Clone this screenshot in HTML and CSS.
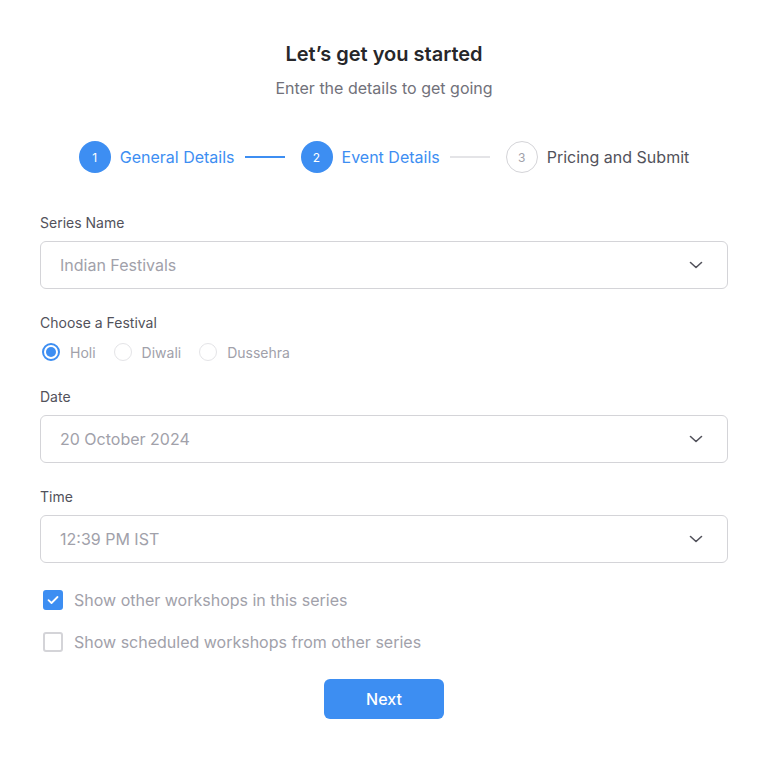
FILE: index.html
```html
<!DOCTYPE html>
<html>
<head>
<meta charset="utf-8">
<link rel="stylesheet" href="styles.css">
</head>
<body>
<div class="page">
  <header class="head">
    <h1 class="title">Let’s get you started</h1>
    <p class="subtitle">Enter the details to get going</p>
  </header>

  <div class="steps">
    <div class="step done"><span class="dot">1</span><span class="step-label">General Details</span></div>
    <span class="line active"></span>
    <div class="step done"><span class="dot">2</span><span class="step-label">Event Details</span></div>
    <span class="line"></span>
    <div class="step todo"><span class="dot">3</span><span class="step-label">Pricing and Submit</span></div>
  </div>

  <form class="form">
    <div class="field">
      <label class="label">Series Name</label>
      <div class="select"><span>Indian Festivals</span>
        <svg class="chev" viewBox="0 0 14 8" width="14" height="8"><path d="M1.5 1.5 7 6.5 12.5 1.5" fill="none" stroke="#52525b" stroke-width="1.6" stroke-linecap="round" stroke-linejoin="round"/></svg>
      </div>
    </div>

    <div class="field radios-field">
      <label class="label">Choose a Festival</label>
      <div class="radios">
        <div class="radio checked"><span class="rc"></span><span>Holi</span></div>
        <div class="radio"><span class="rc"></span><span>Diwali</span></div>
        <div class="radio"><span class="rc"></span><span>Dussehra</span></div>
      </div>
    </div>

    <div class="field">
      <label class="label">Date</label>
      <div class="select"><span>20 October 2024</span>
        <svg class="chev" viewBox="0 0 14 8" width="14" height="8"><path d="M1.5 1.5 7 6.5 12.5 1.5" fill="none" stroke="#52525b" stroke-width="1.6" stroke-linecap="round" stroke-linejoin="round"/></svg>
      </div>
    </div>

    <div class="field">
      <label class="label">Time</label>
      <div class="select"><span>12:39 PM IST</span>
        <svg class="chev" viewBox="0 0 14 8" width="14" height="8"><path d="M1.5 1.5 7 6.5 12.5 1.5" fill="none" stroke="#52525b" stroke-width="1.6" stroke-linecap="round" stroke-linejoin="round"/></svg>
      </div>
    </div>

    <div class="checks">
      <div class="check checked"><span class="cb"><svg viewBox="0 0 12 10" width="12" height="10"><path d="M1.5 5.2 4.5 8 10.5 2" fill="none" stroke="#fff" stroke-width="1.8" stroke-linecap="round" stroke-linejoin="round"/></svg></span><span>Show other workshops in this series</span></div>
      <div class="check"><span class="cb"></span><span>Show scheduled workshops from other series</span></div>
    </div>

    <div class="actions"><button type="button" class="btn">Next</button></div>
  </form>
</div>
</body>
</html>
```

FILE: styles.css
```css
* { box-sizing: border-box; }
body {
  margin: 0;
  background: #fff;
  font-family: Inter, "Noto Sans", sans-serif;
  color: #27272a;
}
.page {
  width: 768px;
  padding: 40px 40px 0;
}
.head { text-align: center; }
.title {
  margin: 0;
  font-size: 20px;
  line-height: 28px;
  font-weight: 600;
  color: #27272a;
}
.subtitle {
  margin: 6px 0 0;
  font-size: 16px;
  line-height: 28px;
  color: #71717a;
}
.steps {
  margin-top: 39px;
  display: flex;
  align-items: center;
  justify-content: center;
  height: 32px;
}
.step { display: flex; align-items: center; gap: 9px; }
.dot {
  width: 32px; height: 32px;
  border-radius: 50%;
  display: flex; align-items: center; justify-content: center;
  font-size: 12px;
}
.step-label { font-size: 16px; line-height: 24px; }
.done .dot { background: #3d8ef2; color: #fff; }
.done .step-label { color: #3d8ef2; }
.todo .dot { border: 1px solid #d4d4d8; color: #a1a1aa; background: #fff; }
.todo .step-label { color: #52525b; }
.line {
  width: 40px;
  height: 2px;
  background: #e4e4e7;
  margin: 0 16px 0 10px;
}
.line.active { background: #3d8ef2; }

.form { margin-top: 40px; display: flex; flex-direction: column; }
.field { display: flex; flex-direction: column; gap: 8px; margin-bottom: 24px; }
.label { font-size: 14px; line-height: 20px; color: #52525b; }
.select {
  height: 48px;
  border: 1px solid #d4d4d8;
  border-radius: 6px;
  padding: 0 24px 0 19px;
  display: flex;
  align-items: center;
  justify-content: space-between;
  font-size: 16px;
  color: #a1a1aa;
}
.radios-field { gap: 9px; margin-bottom: 25px; }
.radios { display: flex; gap: 18px; height: 20px; align-items: center; padding-left: 2px; }
.radio { display: flex; align-items: center; gap: 10px; font-size: 14px; color: #a1a1aa; }
.rc {
  width: 18px; height: 18px;
  border-radius: 50%;
  border: 1px solid #e4e4e7;
  display: inline-block;
  position: relative;
}
.radio.checked .rc { border: 2px solid #3d8ef2; }
.radio.checked .rc::after {
  content: "";
  position: absolute;
  left: 2px; top: 2px;
  width: 10px; height: 10px;
  border-radius: 50%;
  background: #3d8ef2;
}
.checks { display: flex; flex-direction: column; gap: 18px; margin-top: 1px; padding-left: 3px; }
.check { display: flex; align-items: center; gap: 11px; font-size: 16px; line-height: 24px; color: #a1a1aa; }
.cb {
  width: 20px; height: 20px;
  border-radius: 3px;
  border: 2px solid #d4d4d8;
  display: flex; align-items: center; justify-content: center;
}
.check.checked .cb { background: #3d8ef2; border-color: #3d8ef2; }
.actions { display: flex; justify-content: center; margin-top: 25px; }
.btn {
  width: 120px; height: 40px;
  border: none;
  border-radius: 6px;
  background: #3d8ef2;
  color: #fff;
  font-family: Inter, "Noto Sans", sans-serif;
  font-size: 16px;
  font-weight: 500;
}
```
